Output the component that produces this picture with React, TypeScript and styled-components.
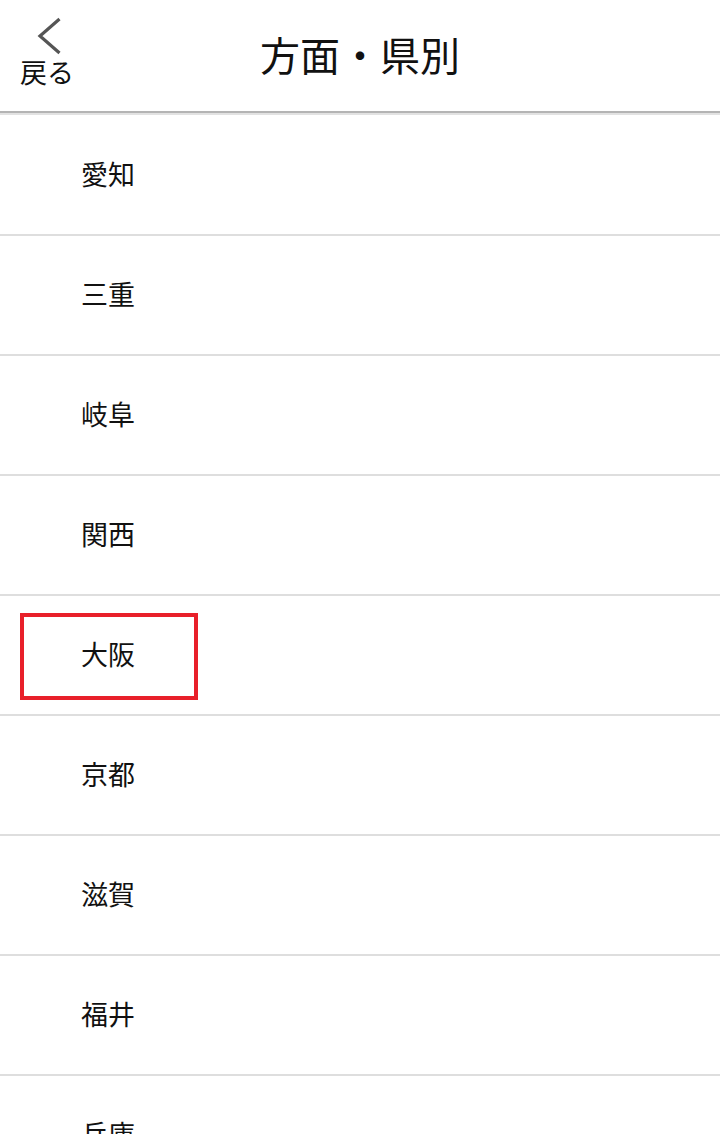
import React from "react";
import styled, { createGlobalStyle } from "styled-components";

const Global = createGlobalStyle`
  html, body { margin: 0; padding: 0; background: #fff; }
  body { font-family: "Noto Sans CJK JP", "Noto Sans", sans-serif; color: #111; }
`;

const Page = styled.div`
  width: 720px;
  height: 1134px;
  overflow: hidden;
  background: #fff;
`;

const Header = styled.header`
  position: relative;
  height: 111px;
  border-bottom: 2px solid #b4b4b4;
  box-shadow: 0 2px 0 #e2e2e2;
  display: flex;
  align-items: center;
  justify-content: center;
`;

const Title = styled.h1`
  margin: 0;
  font-size: 40px;
  font-weight: 400;
  line-height: 1;
  color: #111;
  transform: translateY(-2px);
`;

const Back = styled.button`
  position: absolute;
  left: 20px;
  top: 17px;
  background: none;
  border: 0;
  padding: 0;
  display: flex;
  flex-direction: column;
  align-items: center;
  cursor: pointer;
  font-family: inherit;
`;

const BackLabel = styled.span`
  font-size: 27px;
  line-height: 1;
  color: #111;
  margin-top: 3px;
`;

const List = styled.ul`
  list-style: none;
  margin: 0;
  padding: 3px 0 0;
`;

const Row = styled.li`
  position: relative;
  height: 118px;
  box-sizing: border-box;
  border-bottom: 2px solid #dedede;
  display: flex;
  align-items: center;
  padding: 0 0 4px 81px;
  font-size: 27px;
  color: #111;
  height: 120px;
`;

const Highlight = styled.div`
  position: absolute;
  left: 20px;
  top: 17px;
  width: 178px;
  height: 87px;
  box-sizing: border-box;
  border: 4px solid #e8202a;
  pointer-events: none;
`;

const items = ["愛知", "三重", "岐阜", "関西", "大阪", "京都", "滋賀", "福井", "兵庫"];

export default function App() {
  return (
    <Page>
      <Global />
      <Header>
        <Back>
          <svg width="28" height="38" viewBox="0 0 28 38" style={{ marginLeft: 4 }}>
            <polyline points="24.5,2 5,19 24.5,36" fill="none" stroke="#555" strokeWidth="3.2" />
          </svg>
          <BackLabel>戻る</BackLabel>
        </Back>
        <Title>方面・県別</Title>
      </Header>
      <List>
        {items.map((t) => (
          <Row key={t}>
            {t}
            {t === "大阪" && <Highlight />}
          </Row>
        ))}
      </List>
    </Page>
  );
}
